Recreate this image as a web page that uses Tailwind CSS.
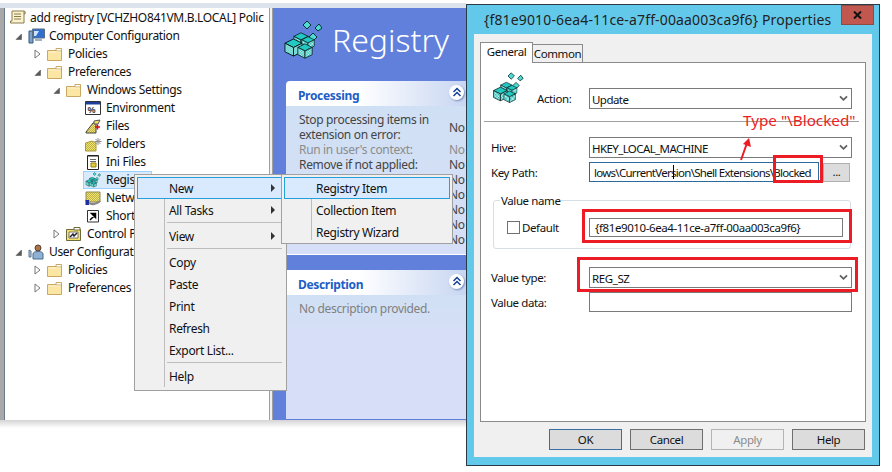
<!DOCTYPE html>
<html lang="en">
<head>
<meta charset="UTF-8">
<title>Registry Properties</title>
<script src="https://cdn.jsdelivr.net/npm/@tailwindcss/browser@4"></script>
</head>
<body class="bg-white">
<svg width="0" height="0" class="absolute">
  <defs>
    <pattern id="dither" width="2" height="2" patternUnits="userSpaceOnUse">
      <rect width="2" height="2" fill="#14b4b0"/><rect width="1" height="1" fill="#dffdf8"/><rect x="1" y="1" width="1" height="1" fill="#dffdf8"/>
    </pattern>
    <pattern id="ydither" width="2" height="2" patternUnits="userSpaceOnUse">
      <rect width="2" height="2" fill="#f6e36a"/><rect width="1" height="1" fill="#b9b24a"/><rect x="1" y="1" width="1" height="1" fill="#b9b24a"/>
    </pattern>
    <symbol id="cube" viewBox="0 0 20 20">
      <path d="M10 1 19 5.500 10 10 1 5.500Z" fill="#22c8c2" stroke="#041f1f"/>
      <path d="M1 5.500 10 10V19L1 14.500Z" fill="url(#dither)" stroke="#041f1f"/>
      <path d="M19 5.500 10 10V19L19 14.500Z" fill="url(#dither)" stroke="#041f1f"/>
    </symbol>
    <symbol id="regicon" viewBox="0 0 38 40">
      <path d="M23 1 27 5 23 9 19 5Z" fill="#4fd9d2" stroke="#063333"/>
      <path d="M35 4 38 8 34 11 31 8Z" fill="#4fd9d2" stroke="#063333"/>
      <path d="M29 13 33 17 29 21 25 17Z" fill="#4fd9d2" stroke="#063333"/>
      <use href="#cube" x="9" y="12" width="16" height="16"/>
      <use href="#cube" x="17" y="16" width="14" height="14"/>
      <use href="#cube" x="0" y="18" width="19" height="19"/>
      <use href="#cube" x="13" y="23" width="16" height="16"/>
    </symbol>
    <symbol id="folder" viewBox="0 0 15 13">
      <path d="M.5 2.500H14.500V12.500H.5Z" fill="#fbe6a4" stroke="#c8a862"/>
      <path d="M9 .5H14.500V3H9Z" fill="#fff" stroke="#c8a862"/>
      <path d="M1.500 4H13.500" stroke="#fff3cc"/>
    </symbol>
    <symbol id="open" viewBox="0 0 7 7"><path d="M6.500 1V6.500H1Z" fill="#595959" stroke="#595959" stroke-width=".6"/></symbol>
    <symbol id="closed" viewBox="0 0 7 10"><path d="M1 1 6 5 1 9Z" fill="#fff" stroke="#777"/></symbol>
    <symbol id="chev" viewBox="0 0 10 8"><path d="M1 1.500 5 5.500 9 1.500" fill="none" stroke="#5f5f5f" stroke-width="2"/></symbol>
    <symbol id="dchev" viewBox="0 0 10 10"><path d="M1.500 5 5 1.500 8.500 5M1.500 9 5 5.500 8.500 9" fill="none" stroke="#14409c" stroke-width="1.500"/></symbol>
  </defs>
</svg>

<div class="relative w-[892px] h-[472px] overflow-hidden bg-white font-['Noto_Sans',sans-serif] text-[12px] leading-[18px] tracking-[-0.33px] text-[#111]">

  <!-- console window -->
  <div class="pt-[3px] w-[466px]">
    <div class="h-[5px] bg-[#dde3ec]"></div>
    <div class="flex h-[412px]">
      <div class="w-[4px] bg-[#a9a9a9]"></div>
      <div class="w-[265px] overflow-hidden border-l border-[#6b7b8c] bg-white pt-[1px]">
        <div class="flex h-[18px] items-center pl-[4px]">
          <svg class="w-[21px] h-[16px] shrink-0" viewBox="0 0 21 16"><path d="M3 1H15V13H1.500V11H3ZM15 1Q17 1 16 4H15" fill="#fbf3cf" stroke="#8a7a4a"/><path d="M5 4H12M5 6.500H12M5 9H12" stroke="#8a7a4a"/></svg>
          <span class="whitespace-nowrap">add registry [VCHZHO841VM.B.LOCAL] Polic</span>
        </div>
        <div class="flex h-[18px] items-center pl-[10px]">
          <svg class="w-[13px] h-[7px]"><use href="#open" width="7" height="7"/></svg>
          <svg class="w-[21px] h-[16px]" viewBox="0 0 21 16"><path d="M1 3H5V15H1Z" fill="#7fa3c8" stroke="#33587e"/><path d="M4.500 1H16.500V10H4.500Z" fill="#2f6fd0" stroke="#5a6f86"/><path d="M6 3H11L8 8H6Z" fill="#cfe4fa"/><path d="M7 11H14V13H7Z" fill="#9fb2c4"/></svg>
          <span>Computer Configuration</span>
        </div>
        <div class="flex h-[18px] items-center pl-[29px]">
          <svg class="w-[13px] h-[10px]"><use href="#closed" width="7" height="10"/></svg>
          <svg class="w-[21px] h-[13px]"><use href="#folder" width="15" height="13"/></svg>
          <span>Policies</span>
        </div>
        <div class="flex h-[18px] items-center pl-[29px]">
          <svg class="w-[13px] h-[7px]"><use href="#open" width="7" height="7"/></svg>
          <svg class="w-[21px] h-[13px]"><use href="#folder" width="15" height="13"/></svg>
          <span>Preferences</span>
        </div>
        <div class="flex h-[18px] items-center pl-[48px]">
          <svg class="w-[13px] h-[7px]"><use href="#open" width="7" height="7"/></svg>
          <svg class="w-[21px] h-[13px]"><use href="#folder" width="15" height="13"/></svg>
          <span>Windows Settings</span>
        </div>
        <div class="flex h-[18px] items-center pl-[80px]">
          <svg class="w-[21px] h-[15px]" viewBox="0 0 21 15"><path d="M.5 .5H15.500V13.500H.5Z" fill="#fff" stroke="#333"/><path d="M1 1H15V3.500H1Z" fill="#1f3f9f"/><text x="2.500" y="12" font-size="9" font-weight="700" fill="#444">%</text></svg>
          <span>Environment</span>
        </div>
        <div class="flex h-[18px] items-center pl-[80px]">
          <svg class="w-[21px] h-[15px]" viewBox="0 0 21 15"><path d="M1 13 8 4H11V14H1Z" fill="url(#ydither)" stroke="#444"/><path d="M9 2 15 1 13 5H9Z" fill="#f8e36a" stroke="#555"/><path d="M10 8H15M12.500 5.500V10.500" stroke="#d41111" stroke-width="1.500"/></svg>
          <span>Files</span>
        </div>
        <div class="flex h-[18px] items-center pl-[80px]">
          <svg class="w-[21px] h-[15px]" viewBox="0 0 21 15"><path d="M.5 6 7 4 11 6V14H.5Z" fill="url(#ydither)" stroke="#a89a3a"/><path d="M13 1V8M9.500 4.500H16.500M10.500 2 15.500 7M15.500 2 10.500 7" stroke="#8f8f8f"/></svg>
          <span>Folders</span>
        </div>
        <div class="flex h-[18px] items-center pl-[80px]">
          <svg class="w-[21px] h-[16px]" viewBox="0 0 21 16"><path d="M2.500 1.500H13.500V15.500H2.500Z" fill="#fff" stroke="#222"/><path d="M4 1V3M6 1V3M8 1V3M10 1V3M12 1V3" stroke="#222"/><path d="M5 5.500H11M5 7.500H11" stroke="#666"/><path d="M6 9H11V13H6Z" fill="#e8cf3a" stroke="#8f7a10"/></svg>
          <span>Ini Files</span>
        </div>
        <div class="flex h-[18px] items-center pl-[78px]">
          <div class="flex h-[18px] w-[69px] items-center border border-[#99d1ff] bg-[#d9ebfb] pl-[1px]">
            <svg class="w-[21px] h-[16px] shrink-0"><use href="#regicon" width="16" height="16"/></svg>
            <span>Registry</span>
          </div>
        </div>
        <div class="flex h-[18px] items-center pl-[80px]">
          <svg class="w-[21px] h-[16px]" viewBox="0 0 21 16"><path d="M1 2H15V12H1Z" fill="url(#ydither)" stroke="#8a8a5a"/><path d="M.5 10H4V15H.5Z" fill="#1f2fa0"/><path d="M4 13Q10 16 15 11" fill="none" stroke="#888" stroke-width="2"/></svg>
          <span>Network Options</span>
        </div>
        <div class="flex h-[18px] items-center pl-[80px]">
          <svg class="w-[21px] h-[14px]" viewBox="0 0 21 14"><path d="M2.500 1.500H13.500V13H2.500Z" fill="#fff" stroke="#333"/><path d="M5 11 10 6M6.500 4.500H10.500V8.500Z" stroke="#000" stroke-width="1.500"/></svg>
          <span>Shortcuts</span>
        </div>
        <div class="flex h-[18px] items-center pl-[48px]">
          <svg class="w-[13px] h-[10px]"><use href="#closed" width="7" height="10"/></svg>
          <svg class="w-[21px] h-[14px]" viewBox="0 0 21 14"><path d="M.5 2.500H14.500V13.500H.5Z" fill="#f4e06a" stroke="#6a6a3a"/><path d="M8 .5H14V3H8Z" fill="#fff" stroke="#6a6a3a"/><path d="M3 5H12V11H3Z" fill="#fff" stroke="#777"/><path d="M4 10 7 7 8 9 11 6" fill="none" stroke="#223" stroke-width="1.500"/></svg>
          <span>Control Panel Settings</span>
        </div>
        <div class="flex h-[18px] items-center pl-[10px]">
          <svg class="w-[13px] h-[7px]"><use href="#open" width="7" height="7"/></svg>
          <svg class="w-[21px] h-[16px]" viewBox="0 0 21 16"><circle cx="10" cy="4" r="3" fill="#a9744a" stroke="#5a4030"/><path d="M5 15V10Q5 7.500 10 7.500T15 10V15Z" fill="#8fb2d4" stroke="#4a6d90"/><path d="M1 6 3 7 3 13H1Z" fill="#b9c9d8" stroke="#5a7590"/></svg>
          <span>User Configuration</span>
        </div>
        <div class="flex h-[18px] items-center pl-[29px]">
          <svg class="w-[13px] h-[10px]"><use href="#closed" width="7" height="10"/></svg>
          <svg class="w-[21px] h-[13px]"><use href="#folder" width="15" height="13"/></svg>
          <span>Policies</span>
        </div>
        <div class="flex h-[18px] items-center pl-[29px]">
          <svg class="w-[13px] h-[10px]"><use href="#closed" width="7" height="10"/></svg>
          <svg class="w-[21px] h-[13px]"><use href="#folder" width="15" height="13"/></svg>
          <span>Preferences</span>
        </div>
      </div>
      <div class="w-[4px] border-x border-[#a0a0a0] bg-[#f0f0f0]"></div>

      <!-- extension pane -->
      <div class="w-[193px] overflow-hidden bg-[#6080dc] pl-[13px]">
        <div class="flex h-[73px] items-start pt-[11px] -ml-[2px]">
          <svg class="mt-[1px] w-[38px] h-[40px] shrink-0"><use href="#regicon" width="38" height="40"/></svg>
          <span class="ml-[10px] text-[32px] font-light leading-[42px] tracking-normal text-white">Registry</span>
        </div>
        <div class="flex h-[25px] items-center justify-between rounded-tl-[4px] bg-gradient-to-r from-white from-40% to-[#c8d6f2] pl-[12px] pr-[2px] font-bold text-[#215dc6]">
          <span class="pt-[4px]">Processing</span>
          <span class="-mt-[3px] flex h-[15px] w-[15px] items-center justify-center rounded-full bg-white shadow-[1px_1px_2px_#7a8fc0]"><svg class="w-[10px] h-[10px]"><use href="#dchev" width="10" height="10"/></svg></span>
        </div>
        <div class="grid h-[149px] grid-cols-[150px_1fr] content-start border-b border-white bg-gradient-to-b from-[#d0e0f4] to-[#d6dff7] pl-[13px] pt-[6px] text-[#444] leading-[15px]">
          <div>Stop processing items in<br>extension on error:</div><div class="pt-[8px] whitespace-nowrap">No</div>
          <div class="text-[#8c8c8c]">Run in user's context:</div><div class="text-[#8c8c8c]">No</div>
          <div>Remove if not applied:</div><div>No</div>
          <div></div><div>No</div>
          <div></div><div>No</div>
          <div></div><div>No</div>
          <div></div><div>No</div>
          <div></div><div>No</div>
        </div>
        <div class="h-[15px]"></div>
        <div class="flex h-[25px] items-center justify-between bg-gradient-to-r from-white from-40% to-[#c8d6f2] pl-[12px] pr-[2px] font-bold text-[#215dc6]">
          <span class="pt-[4px]">Description</span>
          <span class="-mt-[3px] flex h-[15px] w-[15px] items-center justify-center rounded-full bg-white shadow-[1px_1px_2px_#7a8fc0]"><svg class="w-[10px] h-[10px]"><use href="#dchev" width="10" height="10"/></svg></span>
        </div>
        <div class="h-[124px] bg-gradient-to-b from-[#d0e0f4] to-[#d6dff7] from-0% to-30% pl-[13px] pt-[5px] text-[#808080]">No description provided.</div>
      </div>
    </div>
    <div class="h-[8px] bg-gradient-to-b from-[#d4d4d4] to-white"></div>
  </div>

  <!-- context menu -->
  <div class="absolute left-[134px] top-[174px] h-[217px] w-[153px] border border-[#a0a0a0] bg-[#f0f0f0] p-[2px]">
    <div class="absolute left-[29px] top-[24px] bottom-[3px] w-px bg-[#bdbdbd]"></div>
    <div class="relative flex h-[22px] items-center justify-between border border-[#26a0da] bg-[#d9eaff] pl-[31px] pr-[8px]"><span class="pt-[2px]">New</span><span class="border-y-[4px] border-l-[4px] border-y-transparent border-l-[#333]"></span></div>
    <div class="relative flex h-[22px] items-center justify-between pl-[32px] pr-[9px]"><span class="pt-[2px]">All Tasks</span><span class="border-y-[4px] border-l-[4px] border-y-transparent border-l-[#333]"></span></div>
    <div class="relative my-[1px] ml-[30px] mr-[2px] h-[1px] bg-[#bdbdbd]"></div>
    <div class="relative mt-[2px] flex h-[22px] items-center justify-between pl-[32px] pr-[9px]"><span class="pt-[2px]">View</span><span class="border-y-[4px] border-l-[4px] border-y-transparent border-l-[#333]"></span></div>
    <div class="relative my-[1px] ml-[30px] mr-[2px] h-[1px] bg-[#bdbdbd]"></div>
    <div class="relative mt-[2px] flex h-[22px] items-center pl-[32px] pt-[2px]">Copy</div>
    <div class="relative flex h-[22px] items-center pl-[32px] pt-[2px]">Paste</div>
    <div class="relative flex h-[22px] items-center pl-[32px] pt-[2px]">Print</div>
    <div class="relative flex h-[22px] items-center pl-[32px] pt-[2px]">Refresh</div>
    <div class="relative flex h-[22px] items-center pl-[32px] pt-[2px]">Export List...</div>
    <div class="relative my-[1px] ml-[30px] mr-[2px] h-[1px] bg-[#bdbdbd]"></div>
    <div class="relative mt-[2px] flex h-[22px] items-center pl-[32px] pt-[2px]">Help</div>
  </div>

  <!-- submenu -->
  <div class="absolute left-[281px] top-[174px] h-[70px] w-[172px] border border-[#a0a0a0] bg-[#f0f0f0] p-[2px]">
    <div class="absolute left-[29px] top-[24px] bottom-[3px] w-px bg-[#bdbdbd]"></div>
    <div class="relative flex h-[22px] items-center border border-[#26a0da] bg-[#d9eaff] pl-[31px] pt-[2px]">Registry Item</div>
    <div class="relative flex h-[22px] items-center pl-[32px] pt-[2px]">Collection Item</div>
    <div class="relative flex h-[22px] items-center pl-[32px] pt-[2px]">Registry Wizard</div>
  </div>

  <!-- properties dialog -->
  <div class="absolute left-[466px] top-[4px] h-[462px] w-[414px] border border-[#2b3a47] bg-[#63c9ea]">
    <div class="relative h-[29px]">
      <div class="absolute left-[17px] top-[5px] whitespace-nowrap text-[14px] leading-[20px] tracking-[0.15px] text-[#222]">{f81e9010-6ea4-11ce-a7ff-00aa003ca9f6} Properties</div>
      <div class="absolute right-[5px] top-0 flex h-[20px] w-[33px] items-center justify-center border border-[#8f4a44] bg-[#c0584f]">
        <svg class="w-[9px] h-[8px]" viewBox="0 0 9 8"><path d="M1 .5 8 7.500M8 .5 1 7.500" stroke="#111" stroke-width="2"/></svg>
      </div>
    </div>
    <div class="mx-[7px] h-[423px] bg-[#f0f0f0] pt-[8px] pl-[6px] pr-[6px] text-[11.5px] tracking-[-0.4px]">
      <div class="flex h-[20px] items-end">
        <div class="relative z-10 -mb-[1px] flex h-[21px] w-[53px] items-center justify-center border border-b-0 border-[#8a8a8a] bg-white pb-[2px]">General</div>
        <div class="flex h-[18px] w-[50px] items-center justify-center border border-b-0 border-l-0 border-[#8a8a8a] bg-[#f0f0f0]">Common</div>
      </div>
      <div class="h-[360px] w-[386px] border border-[#8a8a8a] bg-white">
        <div class="mt-[9px] flex h-[37px] items-end pl-[11px]">
          <svg class="mb-[5px] w-[45px] h-[32px] shrink-0"><use href="#regicon" width="32" height="32"/></svg>
          <span class="w-[52px] pb-[1px]">Action:</span>
          <div class="flex h-[21px] w-[263px] items-center justify-between border border-[#7a7a7a] pl-[2px] pr-[3px] tracking-[-0.55px]"><span class="pt-[2px]">Update</span><svg class="w-[9px] h-[7px]"><use href="#chev" width="9" height="7"/></svg></div>
        </div>
        <div class="ml-[3px] mt-[12px] h-px w-[375px] bg-[#a0a0a0]"></div>
        <div class="mt-[15px] flex h-[21px] items-center pl-[10px]">
          <span class="w-[98px]">Hive:</span>
          <div class="flex h-[21px] w-[263px] items-center justify-between border border-[#7a7a7a] pl-[2px] pr-[3px] tracking-[-0.6px]"><span class="pt-[2px]">HKEY_LOCAL_MACHINE</span><svg class="w-[9px] h-[7px]"><use href="#chev" width="9" height="7"/></svg></div>
        </div>
        <div class="mt-[4px] flex h-[20px] items-center pl-[10px]">
          <span class="w-[98px] pt-[2px]">Key Path:</span>
          <div class="relative h-[20px] w-[230px] overflow-hidden whitespace-nowrap border border-[#2b6a9c] pl-[4px] pt-[1px] tracking-[-0.72px]">lows\CurrentVersion\Shell Extensions\Blocked<span class="absolute left-[83px] top-[2px] h-[14px] w-px bg-black"></span></div>
          <div class="ml-[4px] flex h-[19px] w-[27px] items-center justify-center border border-[#b0b0b0] bg-[#dcdcdc]">...</div>
        </div>
        <div class="relative ml-[12px] mt-[18px] flex h-[49px] w-[358px] items-center rounded-[3px] border border-[#d5dfe5] pl-[13px] pt-[6px]">
          <span class="absolute -top-[9px] left-[6px] bg-white px-[1px]">Value name</span>
          <span class="h-[13px] w-[13px] border border-[#707070]"></span>
          <span class="ml-[2px] w-[67px]">Default</span>
          <div class="h-[19px] w-[254px] whitespace-nowrap border border-[#7a7a7a] pl-[5px] leading-[17px]">{f81e9010-6ea4-11ce-a7ff-00aa003ca9f6}</div>
        </div>
        <div class="mt-[18px] flex h-[21px] items-center pl-[10px]">
          <span class="w-[98px]">Value type:</span>
          <div class="flex h-[21px] w-[263px] items-center justify-between border border-[#7a7a7a] pl-[2px] pr-[3px]"><span class="pt-[2px]">REG_SZ</span><svg class="w-[9px] h-[7px]"><use href="#chev" width="9" height="7"/></svg></div>
        </div>
        <div class="mt-[4px] flex h-[20px] items-center pl-[10px]">
          <span class="w-[98px] pt-[2px]">Value data:</span>
          <div class="h-[20px] w-[263px] border border-[#7a7a7a]"></div>
        </div>
      </div>
      <div class="mt-[7px] flex justify-end gap-[8px] pr-[1px]">
        <div class="flex h-[21px] w-[73px] items-center justify-center border border-[#3a6f9f] bg-[#dcdcdc]">OK</div>
        <div class="flex h-[21px] w-[73px] items-center justify-center border border-[#6f6f6f] bg-[#dcdcdc]">Cancel</div>
        <div class="flex h-[21px] w-[73px] items-center justify-center border border-[#b4b4b4] bg-[#f0f0f0] text-[#8c8c8c]">Apply</div>
        <div class="flex h-[21px] w-[73px] items-center justify-center border border-[#6f6f6f] bg-[#dcdcdc]">Help</div>
      </div>
    </div>
  </div>

  <!-- red annotations drawn over the dialog -->
  <div class="absolute left-[773px] top-[155px] h-[28px] w-[50px] border-[3px] border-[#ed1c24]"></div>
  <div class="absolute left-[582px] top-[209px] h-[34px] w-[270px] border-[3px] border-[#ed1c24]"></div>
  <div class="absolute left-[577px] top-[257px] h-[35px] w-[281px] border-[3px] border-[#ed1c24]"></div>
  <div class="absolute left-[743px] top-[110px] whitespace-nowrap text-[15.25px] leading-[20px] tracking-normal text-[#ed1c24]">Type "\Blocked"</div>
  <svg class="absolute left-[736px] top-[136px] w-[18px] h-[26px]" viewBox="0 0 18 26"><path d="M5 24 11 7" stroke="#ed1c24" stroke-width="2"/><path d="M13 2 15 11 7 8Z" fill="#ed1c24"/></svg>
</div>
</body>
</html>
